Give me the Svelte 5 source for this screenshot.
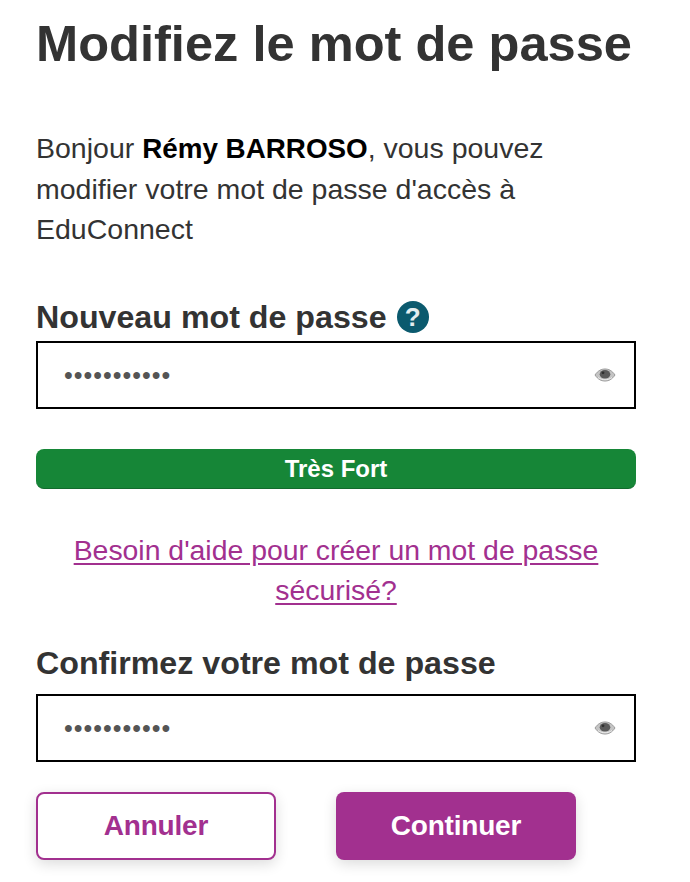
<script>
  let newPassword = "motdepasse1";
  let confirmPassword = "motdepasse1";
</script>

{#snippet eye()}
  <svg class="eye" viewBox="0 0 22 16" aria-hidden="true">
    <path d="M1 8C4 3.500 7.500 2 11 2S18 3.500 21 8c-3 4.500-6.500 6-10 6S4 12.500 1 8Z" fill="#c4c4c4" stroke="#999" stroke-width="1" />
    <ellipse cx="11" cy="7.200" rx="5.300" ry="4.300" fill="#5a5a5a" />
    <circle cx="9" cy="5.800" r="1.400" fill="#2f2f2f" />
    <path d="M4 10.500c4 3 10 3 14 0" fill="none" stroke="#ececec" stroke-width="1" />
  </svg>
{/snippet}

<main class="page">
  <h1>Modifiez le mot de passe</h1>

  <p class="intro">Bonjour <strong>Rémy BARROSO</strong>, vous pouvez modifier votre mot de passe d'accès à EduConnect</p>

  <label class="label first" for="new-password">
    Nouveau mot de passe
    <span class="help">?</span>
  </label>
  <div class="field">
    <input id="new-password" type="password" bind:value={newPassword} />
    {@render eye()}
  </div>

  <div class="strength">Très Fort</div>

  <a class="help-link" href="#aide">Besoin d'aide pour créer un mot de passe sécurisé?</a>

  <label class="label second" for="confirm-password">Confirmez votre mot de passe</label>
  <div class="field">
    <input id="confirm-password" type="password" bind:value={confirmPassword} />
    {@render eye()}
  </div>

  <div class="actions">
    <button class="btn outline" type="button">Annuler</button>
    <button class="btn solid" type="button">Continuer</button>
  </div>
</main>

<style>
  :global(body) {
    background: #fff;
  }
  .page {
    box-sizing: border-box;
    width: 690px;
    height: 882px;
    overflow: hidden;
    padding: 16px 54px 0 36px;
    font-family: "Liberation Sans", Arial, sans-serif;
    color: #333;
  }
  h1 {
    margin: 0;
    font-size: 50.600px;
    line-height: 55px;
    font-weight: 700;
    white-space: nowrap;
  }
  .intro {
    margin: 57px 0 0;
    font-size: 28.500px;
    line-height: 40px;
    width: 560px;
  }
  .intro strong {
    color: #000;
    font-size: 27.800px;
  }
  .label {
    display: flex;
    align-items: center;
    gap: 10px;
    font-size: 32.200px;
    line-height: 40px;
    font-weight: 700;
  }
  .first {
    margin-top: 48px;
  }
  .second {
    margin-top: 33px;
  }
  .second + .field {
    margin-top: 11px;
  }
  .help {
    width: 32px;
    height: 32px;
    border-radius: 50%;
    background: #0b5a6e;
    color: #e4eef0;
    font-size: 26px;
    line-height: 32px;
    text-align: center;
  }
  .field {
    box-sizing: border-box;
    display: flex;
    align-items: center;
    width: 600px;
    height: 68px;
    margin-top: 4px;
    padding: 0 18px 0 26px;
    border: 2px solid #000;
    background: #fff;
  }
  .field input {
    flex: 1;
    min-width: 0;
    border: 0;
    outline: 0;
    padding: 0;
    background: transparent;
    font-family: "Liberation Sans", Arial, sans-serif;
    font-size: 25px;
    color: #555;
    letter-spacing: 1px;
  }
  .eye {
    width: 22px;
    height: 16px;
  }
  .strength {
    width: 600px;
    height: 40px;
    margin-top: 40px;
    border-radius: 8px;
    border-bottom: 1px solid #126b2d;
    box-sizing: border-box;
    background: #168637;
    color: #fff;
    font-size: 24px;
    line-height: 40px;
    font-weight: 700;
    text-align: center;
  }
  .help-link {
    display: block;
    width: 600px;
    margin-top: 41px;
    font-size: 28.400px;
    line-height: 40px;
    text-align: center;
    color: #a2308f;
    text-decoration: underline;
    text-underline-offset: 3px;
    padding: 0 20px;
    box-sizing: border-box;
  }
  .actions {
    display: flex;
    gap: 60px;
    margin-top: 30px;
  }
  .btn {
    box-sizing: border-box;
    width: 240px;
    height: 68px;
    border-radius: 8px;
    font-family: "Liberation Sans", Arial, sans-serif;
    font-size: 28px;
    font-weight: 700;
    letter-spacing: -0.200px;
    box-shadow: 0 4px 14px rgba(0, 0, 0, 0.14);
  }
  .outline {
    background: #fff;
    border: 2px solid #a2308f;
    color: #a2308f;
  }
  .solid {
    background: #a2308f;
    border: 0;
    color: #fff;
  }
</style>
